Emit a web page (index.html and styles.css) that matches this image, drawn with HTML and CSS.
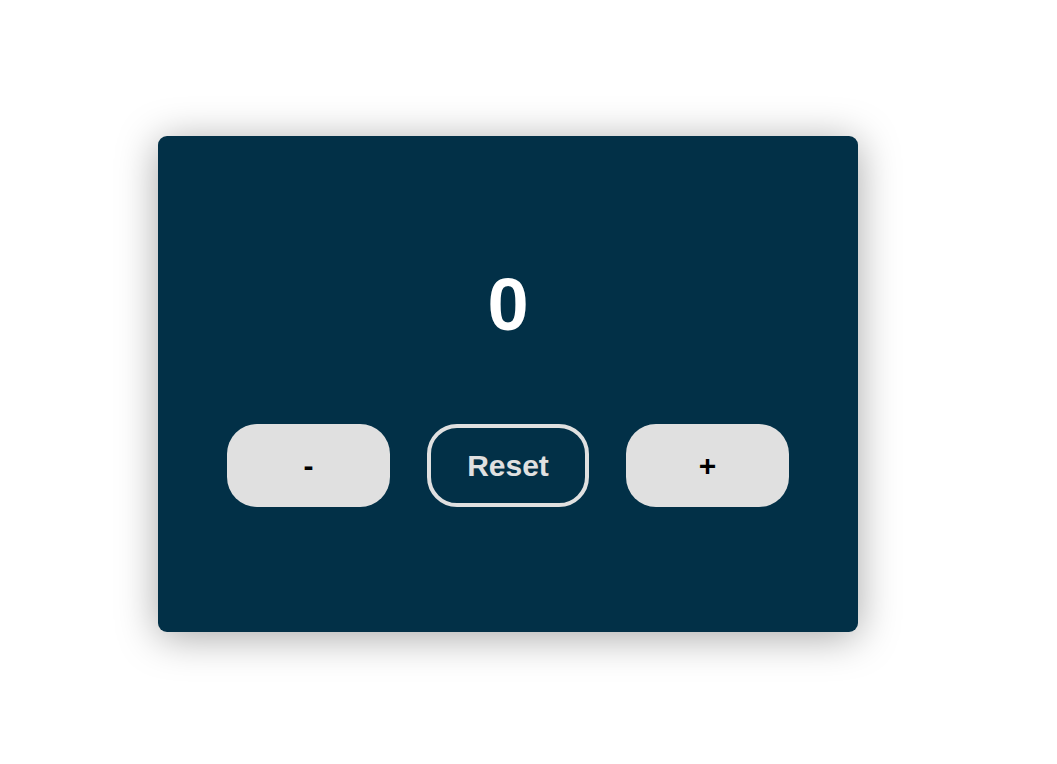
FILE: index.html
```html
<!DOCTYPE html>
<html>
<head>
<meta charset="utf-8">
<link rel="stylesheet" href="styles.css">
</head>
<body>
<div class="page">
  <div class="card">
    <div class="count">0</div>
    <div class="controls">
      <button class="btn btn-solid">-</button>
      <button class="btn btn-outline">Reset</button>
      <button class="btn btn-solid">+</button>
    </div>
  </div>
</div>
</body>
</html>
```
FILE: styles.css
```css
html, body {
  margin: 0;
  padding: 0;
  background: #ffffff;
  font-family: "Liberation Sans", Arial, sans-serif;
}
.page {
  box-sizing: border-box;
  min-height: 100vh;
  padding: 136px 0 0 158px;
}
.card {
  box-sizing: border-box;
  width: 700px;
  height: 496px;
  background: #023047;
  border-radius: 9px;
  box-shadow: 0 5px 40px rgba(0, 0, 0, 0.35);
  padding-top: 132px;
  display: flex;
  flex-direction: column;
  align-items: center;
}
.count {
  color: #ffffff;
  font-weight: 700;
  font-size: 74px;
  line-height: 1;
  height: 74px;
}
.controls {
  margin-top: 82px;
  display: flex;
  gap: 37px;
}
.btn {
  box-sizing: border-box;
  width: 163px;
  height: 83px;
  border-radius: 30px;
  font-family: "Liberation Sans", Arial, sans-serif;
  font-weight: 700;
  font-size: 30px;
  padding: 0;
  cursor: pointer;
}
.btn-solid {
  background: #e0e0e0;
  color: #000000;
  border: none;
}
.btn-outline {
  width: 162px;
  background: transparent;
  color: #e0e0e0;
  border: 4px solid #e0e0e0;
}
```
